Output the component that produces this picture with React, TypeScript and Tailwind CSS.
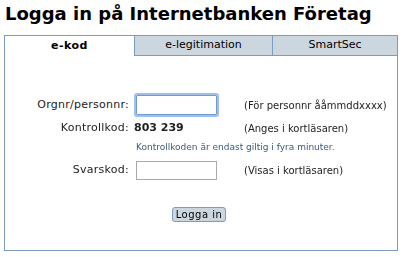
export default function App() {
  const font = { fontFamily: '"DejaVu Sans", Verdana, sans-serif' };
  return (
    <div className="w-[404px] h-[257px] bg-white text-black" style={font}>
      <h1 className="pl-[5px] pt-[3px] h-[35px] text-[18px] leading-[21px] font-bold">
        Logga in på Internetbanken Företag
      </h1>
      <div className="ml-[4px] w-[394px] h-[216px] border border-[#7b9bc3] flex flex-col">
        {/* Tabs */}
        <div className="flex h-[20px] text-[11px]">
          <div className="w-[129px] flex items-center justify-center font-bold tracking-[0.5px]">e-kod</div>
          <div className="w-[138px] flex items-center justify-center bg-[#ccd6de] border-l border-b border-[#7b9bc3]">
            e-legitimation
          </div>
          <div className="flex-1 flex items-center justify-center bg-[#ccd6de] border-l border-b border-[#7b9bc3]">
            SmartSec
          </div>
        </div>

        {/* Form */}
        <div className="grid grid-cols-[131px_104px_1fr] grid-rows-[22px_24px_16px_28px] pt-[38px] text-[#222]">
          <div className="flex items-center justify-end pr-[7px] text-[11px] tracking-[0.25px]">Orgnr/personnr:</div>
          <div className="flex items-center">
            <input
              autoFocus
              className="w-[81px] h-[20px] border border-[#6f9ad6] outline outline-2 outline-[#9ec0ea] rounded-[1px] px-1 text-[11px]"
            />
          </div>
          <div className="flex items-center pl-[4px] text-[10px]">(För personnr ååmmddxxxx)</div>

          <div className="flex items-center justify-end pr-[7px] text-[11px] tracking-[0.25px]">Kontrollkod:</div>
          <div className="flex items-center font-bold text-[11px] -ml-[2px]">803 239</div>
          <div className="flex items-center pl-[4px] text-[10px]">(Anges i kortläsaren)</div>

          <div />
          <div className="col-span-2 flex items-center text-[9px] text-[#3b5a7c]">
            Kontrollkoden är endast giltig i fyra minuter.
          </div>

          <div className="flex items-center justify-end pr-[7px] text-[11px] tracking-[0.25px]">Svarskod:</div>
          <div className="flex items-center">
            <input className="w-[81px] h-[19px] border border-[#aaaaaa] px-1 text-[11px] outline-none" />
          </div>
          <div className="flex items-center pl-[4px] text-[10px]">(Visas i kortläsaren)</div>
        </div>

        <div className="flex pl-[167px] mt-[23px]">
          <button className="w-[54px] h-[15px] bg-[#ccd6de] border border-[#7b9bc3] rounded-[3px] text-[10px] leading-[13px] tracking-[0.5px] text-black">
            Logga in
          </button>
        </div>
      </div>
    </div>
  );
}
